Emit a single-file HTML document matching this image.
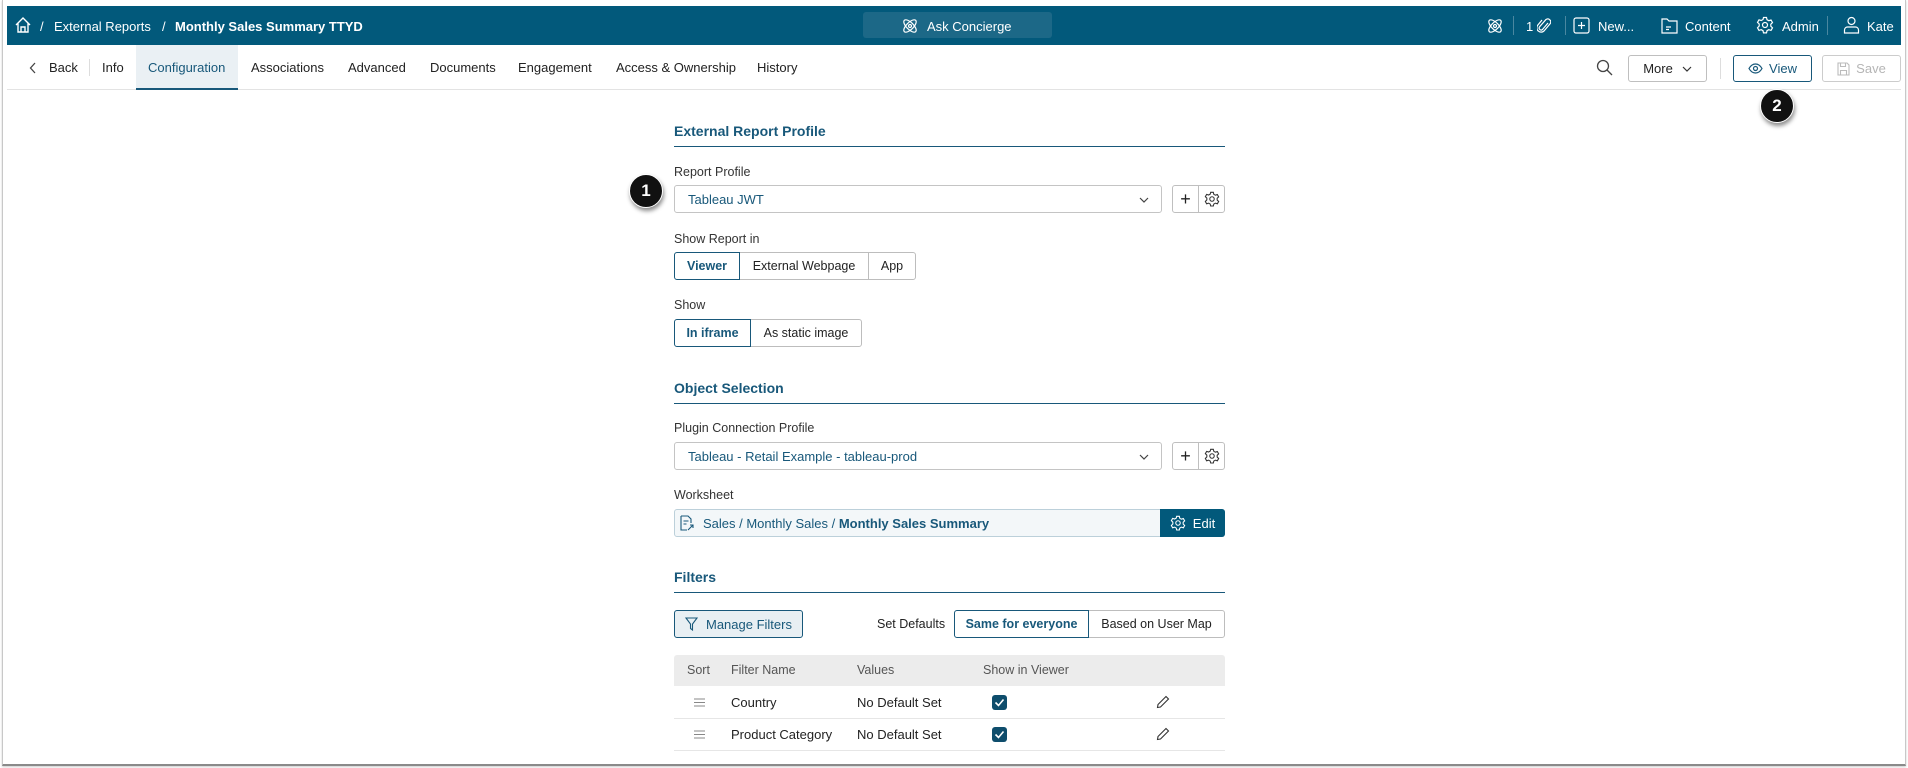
<!DOCTYPE html>
<html><head><meta charset="utf-8"><style>
*{box-sizing:border-box;margin:0;padding:0}
body{width:1908px;height:768px;background:#fff;font-family:"Liberation Sans",sans-serif;font-size:13px;color:#222;position:relative;overflow:hidden}
.a{position:absolute;white-space:nowrap}
.frame{position:absolute;left:2px;top:0;width:1904px;height:766px;border:1px solid #c8c8c8;border-top:none;border-bottom:2px solid #8a8a8a;box-shadow:0 1px 2px rgba(0,0,0,.2)}
.top{position:absolute;left:7px;top:6px;width:1894px;height:39px;background:#02597b;color:#fff}
.top .a{top:13px;font-size:13px}
.nav{position:absolute;left:7px;top:45px;width:1894px;height:45px;border-bottom:1px solid #e3e3e3}
.nav .a{top:15px}
.btn{position:absolute;border:1px solid #bfbfbf;border-radius:3px;background:#fff;display:flex;align-items:center;justify-content:center;gap:6px}
.h{position:absolute;left:674px;width:551px;font-weight:bold;color:#18587a;font-size:14px;border-bottom:1px solid #18587a;padding-bottom:7px}
.lbl{position:absolute;left:674px;font-size:12.5px;color:#333}
.sel{position:absolute;left:674px;width:488px;height:28px;border:1px solid #c4c4c4;border-radius:3px;color:#18587a;padding:6px 13px}
.seg{position:absolute;height:28px;border:1px solid #bdbdbd;display:flex;align-items:center;justify-content:center;font-size:12.5px}
.seg.on{border-color:#18587a;color:#18587a;font-weight:bold;z-index:2}
.badge{position:absolute;width:34px;height:34px;border-radius:50%;background:#111;color:#fff;font-weight:bold;font-size:17px;display:flex;align-items:center;justify-content:center;box-shadow:1px 3px 4px rgba(0,0,0,.45);border:1px solid #fff}
.cb{position:absolute;width:15px;height:15px;background:#0e4d6c;border-radius:3px}
</style></head><body>
<div class="frame"></div>
<div class="top">
 <svg class="a" style="left:7px;top:10px" width="18" height="18" viewBox="0 0 18 18" fill="none" stroke="#fff" stroke-width="1.4"><path d="M2 9L9 2l7 7M4 7.5V16h10V7.5M7 16v-5h4v5"/></svg>
 <span class="a" style="left:33px">/</span>
 <span class="a" style="left:47px">External Reports</span>
 <span class="a" style="left:155px">/</span>
 <span class="a" style="left:168px;font-weight:bold">Monthly Sales Summary TTYD</span>
 <div class="a" style="left:856px;top:6px;width:189px;height:26px;background:#1c6887;border-radius:3px"></div>
 <svg class="a" style="left:894px;top:11px" width="18" height="18" viewBox="0 0 18 18" fill="none" stroke="#fff" stroke-width="1.2"><ellipse cx="9" cy="9" rx="3.5" ry="8" transform="rotate(45 9 9)"/><ellipse cx="9" cy="9" rx="3.5" ry="8" transform="rotate(-45 9 9)"/><circle cx="9" cy="9" r="1.5"/></svg>
 <span class="a" style="left:920px">Ask Concierge</span>
 <svg class="a" style="left:1479px;top:11px" width="18" height="18" viewBox="0 0 18 18" fill="none" stroke="#fff" stroke-width="1.2"><ellipse cx="9" cy="9" rx="3.5" ry="8" transform="rotate(45 9 9)"/><ellipse cx="9" cy="9" rx="3.5" ry="8" transform="rotate(-45 9 9)"/><circle cx="9" cy="9" r="1.5"/></svg>
 <div class="a" style="left:1506px;top:10px;width:1px;height:19px;background:#4a87a0"></div>
 <span class="a" style="left:1519px">1</span>
 <svg class="a" style="left:1530px;top:11px" width="14" height="17" viewBox="0 0 14 17" fill="none" stroke="#fff" stroke-width="1.2"><path d="M11 6l-5.5 6.5a2 2 0 01-3-2.6L9 2.5a3 3 0 014.3 4L7 14a4.3 4.3 0 01-6.3-5.8L5 3"/></svg>
 <div class="a" style="left:1558px;top:10px;width:1px;height:19px;background:#4a87a0"></div>
 <svg class="a" style="left:1566px;top:11px" width="17" height="17" viewBox="0 0 17 17" fill="none" stroke="#fff" stroke-width="1.2"><rect x="1" y="1" width="15" height="15" rx="2"/><path d="M8.5 5v7M5 8.5h7"/></svg>
 <span class="a" style="left:1591px">New...</span>
 <svg class="a" style="left:1654px;top:11px" width="17" height="17" viewBox="0 0 17 17" fill="none" stroke="#fff" stroke-width="1.2"><path d="M1 2h5l2 2h8v12H1z M5 10h5M5 12.5h3"/></svg>
 <span class="a" style="left:1678px">Content</span>
 <svg class="a" style="left:1749px;top:10px" width="18" height="18" viewBox="0 0 18 18" fill="none" stroke="#fff" stroke-width="1.2"><path d="M7.5 1.5h3l.5 2.2 1.8 1 2.2-.7 1.5 2.6-1.7 1.6v2l1.7 1.6-1.5 2.6-2.2-.7-1.8 1-.5 2.2h-3l-.5-2.2-1.8-1-2.2.7-1.5-2.6L3.2 10V8L1.5 6.4 3 3.8l2.2.7 1.8-1z"/><circle cx="9" cy="9" r="2.5"/></svg>
 <span class="a" style="left:1775px">Admin</span>
 <div class="a" style="left:1820px;top:10px;width:1px;height:19px;background:#4a87a0"></div>
 <svg class="a" style="left:1836px;top:10px" width="17" height="18" viewBox="0 0 17 18" fill="none" stroke="#fff" stroke-width="1.2"><circle cx="8.5" cy="5" r="3.5"/><path d="M1.5 17v-3a3 3 0 013-3h8a3 3 0 013 3v3z"/></svg>
 <span class="a" style="left:1860px">Kate</span>
</div>
<div class="nav">
 <div class="a" style="left:129px;top:0;width:102px;height:45px;background:#eaf0f4;border-bottom:2px solid #18587a"></div>
 <svg class="a" style="left:22px;top:17px" width="8" height="12" viewBox="0 0 8 12" fill="none" stroke="#444" stroke-width="1.3"><path d="M6 1L1.5 6 6 11"/></svg>
 <span class="a" style="left:42px">Back</span>
 <div class="a" style="left:82px;top:14px;width:1px;height:17px;background:#ddd"></div>
 <span class="a" style="left:95px">Info</span>
 <span class="a" style="left:141px;color:#18587a">Configuration</span>
 <span class="a" style="left:244px">Associations</span>
 <span class="a" style="left:341px">Advanced</span>
 <span class="a" style="left:423px">Documents</span>
 <span class="a" style="left:511px">Engagement</span>
 <span class="a" style="left:609px">Access &amp; Ownership</span>
 <span class="a" style="left:750px">History</span>
 <svg class="a" style="left:1589px;top:14px" width="17" height="17" viewBox="0 0 17 17" fill="none" stroke="#444" stroke-width="1.3"><circle cx="7" cy="7" r="5.5"/><path d="M11 11l5 5"/></svg>
</div>
<div class="btn" style="left:1628px;top:55px;width:79px;height:27px;font-size:13px;gap:9px">More <svg width="10" height="6" viewBox="0 0 10 6" fill="none" stroke="#333" stroke-width="1.2"><path d="M1 1l4 4 4-4"/></svg></div>
<div class="a" style="left:1720px;top:58px;width:1px;height:21px;background:#ddd"></div>
<div class="btn" style="left:1733px;top:55px;width:79px;height:27px;border-color:#18587a;color:#18587a">
 <svg width="15" height="11" viewBox="0 0 15 11" fill="none" stroke="#18587a" stroke-width="1.2"><path d="M1 5.5C3 2 5 1 7.5 1S12 2 14 5.5C12 9 10 10 7.5 10S3 9 1 5.5z"/><circle cx="7.5" cy="5.5" r="2"/></svg>View</div>
<div class="btn" style="left:1822px;top:55px;width:79px;height:27px;border-color:#ccc;color:#b5b5b5">
 <svg width="13" height="14" viewBox="0 0 13 14" fill="none" stroke="#bbb" stroke-width="1.1"><path d="M1 1h9l2 2v10H1z M3.5 1v3.5h5V1 M3.5 13V8.5h6V13"/></svg>Save</div>
<div class="badge" style="left:1760px;top:89px">2</div>
<div class="badge" style="left:629px;top:174px">1</div>

<div class="h" style="top:123px">External Report Profile</div>
<div class="lbl" style="top:165px">Report Profile</div>
<div class="sel" style="top:185px">Tableau JWT<svg class="a" style="right:12px;top:11px" width="10" height="6" viewBox="0 0 10 6" fill="none" stroke="#444" stroke-width="1.2"><path d="M1 1l4 4 4-4"/></svg></div>
<div class="btn" style="left:1172px;top:185px;width:27px;height:28px;border-radius:3px 0 0 3px;font-size:18px">+</div>
<div class="btn" style="left:1198px;top:185px;width:27px;height:28px;border-radius:0 3px 3px 0"><svg width="16" height="16" viewBox="0 0 18 18" fill="none" stroke="#333" stroke-width="1.2"><path d="M7.5 1.5h3l.5 2.2 1.8 1 2.2-.7 1.5 2.6-1.7 1.6v2l1.7 1.6-1.5 2.6-2.2-.7-1.8 1-.5 2.2h-3l-.5-2.2-1.8-1-2.2.7-1.5-2.6L3.2 10V8L1.5 6.4 3 3.8l2.2.7 1.8-1z"/><circle cx="9" cy="9" r="2.5"/></svg></div>
<div class="lbl" style="top:232px">Show Report in</div>
<div class="seg on" style="left:674px;top:252px;width:66px;border-radius:3px 0 0 3px">Viewer</div>
<div class="seg" style="left:739px;top:252px;width:130px">External Webpage</div>
<div class="seg" style="left:868px;top:252px;width:48px;border-radius:0 3px 3px 0">App</div>
<div class="lbl" style="top:298px">Show</div>
<div class="seg on" style="left:674px;top:319px;width:77px;border-radius:3px 0 0 3px">In iframe</div>
<div class="seg" style="left:750px;top:319px;width:112px;border-radius:0 3px 3px 0">As static image</div>

<div class="h" style="top:380px">Object Selection</div>
<div class="lbl" style="top:421px">Plugin Connection Profile</div>
<div class="sel" style="top:442px">Tableau - Retail Example - tableau-prod<svg class="a" style="right:12px;top:11px" width="10" height="6" viewBox="0 0 10 6" fill="none" stroke="#444" stroke-width="1.2"><path d="M1 1l4 4 4-4"/></svg></div>
<div class="btn" style="left:1172px;top:442px;width:27px;height:28px;border-radius:3px 0 0 3px;font-size:18px">+</div>
<div class="btn" style="left:1198px;top:442px;width:27px;height:28px;border-radius:0 3px 3px 0"><svg width="16" height="16" viewBox="0 0 18 18" fill="none" stroke="#333" stroke-width="1.2"><path d="M7.5 1.5h3l.5 2.2 1.8 1 2.2-.7 1.5 2.6-1.7 1.6v2l1.7 1.6-1.5 2.6-2.2-.7-1.8 1-.5 2.2h-3l-.5-2.2-1.8-1-2.2.7-1.5-2.6L3.2 10V8L1.5 6.4 3 3.8l2.2.7 1.8-1z"/><circle cx="9" cy="9" r="2.5"/></svg></div>
<div class="lbl" style="top:488px">Worksheet</div>
<div class="a" style="left:674px;top:509px;width:551px;height:28px;border:1px solid #bcd0da;border-radius:3px;background:#f3f7f9"></div>
<svg class="a" style="left:680px;top:515px" width="14" height="16" viewBox="0 0 14 16" fill="none" stroke="#18587a" stroke-width="1.1"><path d="M1 1h7l3 3v4 M1 1v14h6 M3.5 6h5M3.5 9h3M8 15l5-5M10 10h3v3"/></svg>
<span class="a" style="left:703px;top:516px;color:#18587a">Sales / Monthly Sales / <b>Monthly Sales Summary</b></span>
<div class="a" style="left:1160px;top:509px;width:65px;height:28px;background:#02597b;border-radius:0 3px 3px 0;color:#fff;display:flex;align-items:center;justify-content:center;gap:7px"><svg width="16" height="16" viewBox="0 0 18 18" fill="none" stroke="#fff" stroke-width="1.2"><path d="M7.5 1.5h3l.5 2.2 1.8 1 2.2-.7 1.5 2.6-1.7 1.6v2l1.7 1.6-1.5 2.6-2.2-.7-1.8 1-.5 2.2h-3l-.5-2.2-1.8-1-2.2.7-1.5-2.6L3.2 10V8L1.5 6.4 3 3.8l2.2.7 1.8-1z"/><circle cx="9" cy="9" r="2.5"/></svg>Edit</div>

<div class="h" style="top:569px">Filters</div>
<div class="a" style="left:674px;top:610px;width:129px;height:28px;border:1px solid #18587a;border-radius:3px;background:#e8eff3;color:#18587a;display:flex;align-items:center;justify-content:center;gap:8px"><svg width="13" height="14" viewBox="0 0 13 14" fill="none" stroke="#18587a" stroke-width="1.1"><path d="M1 1h11L7.5 7v6L5.5 11.5V7z"/></svg>Manage Filters</div>
<span class="a" style="left:877px;top:617px;font-size:12.5px">Set Defaults</span>
<div class="seg on" style="left:954px;top:610px;width:135px;border-radius:3px 0 0 3px">Same for everyone</div>
<div class="seg" style="left:1088px;top:610px;width:137px;border-radius:0 3px 3px 0">Based on User Map</div>
<div class="a" style="left:674px;top:655px;width:551px;height:31px;background:#ececec;border-radius:3px 3px 0 0"></div>
<span class="a" style="left:687px;top:663px;color:#555;font-size:12.5px">Sort</span>
<span class="a" style="left:731px;top:663px;color:#555;font-size:12.5px">Filter Name</span>
<span class="a" style="left:857px;top:663px;color:#555;font-size:12.5px">Values</span>
<span class="a" style="left:983px;top:663px;color:#555;font-size:12.5px">Show in Viewer</span>
<div class="a" style="left:674px;top:718px;width:551px;height:1px;background:#e6e6e6"></div>
<div class="a" style="left:674px;top:750px;width:551px;height:1px;background:#e6e6e6"></div>
<svg class="a" style="left:694px;top:698px" width="11" height="9" viewBox="0 0 11 9" stroke="#888" stroke-width="1.1"><path d="M0 1h11M0 4.5h11M0 8h11"/></svg>
<span class="a" style="left:731px;top:695px">Country</span>
<span class="a" style="left:857px;top:695px">No Default Set</span>
<div class="cb" style="left:992px;top:695px"></div>
<svg class="a" style="left:994px;top:698px" width="11" height="9" viewBox="0 0 11 9" fill="none" stroke="#fff" stroke-width="1.6"><path d="M1.5 4.5l3 3 5-6"/></svg>
<svg class="a" style="left:1156px;top:695px" width="14" height="14" viewBox="0 0 14 14" fill="none" stroke="#333" stroke-width="1.1"><path d="M10 1.5l2.5 2.5L4.5 12 1.5 12.5 2 9.5z"/></svg>
<svg class="a" style="left:694px;top:730px" width="11" height="9" viewBox="0 0 11 9" stroke="#888" stroke-width="1.1"><path d="M0 1h11M0 4.5h11M0 8h11"/></svg>
<span class="a" style="left:731px;top:727px">Product Category</span>
<span class="a" style="left:857px;top:727px">No Default Set</span>
<div class="cb" style="left:992px;top:727px"></div>
<svg class="a" style="left:994px;top:730px" width="11" height="9" viewBox="0 0 11 9" fill="none" stroke="#fff" stroke-width="1.6"><path d="M1.5 4.5l3 3 5-6"/></svg>
<svg class="a" style="left:1156px;top:727px" width="14" height="14" viewBox="0 0 14 14" fill="none" stroke="#333" stroke-width="1.1"><path d="M10 1.5l2.5 2.5L4.5 12 1.5 12.5 2 9.5z"/></svg>
</body></html>
